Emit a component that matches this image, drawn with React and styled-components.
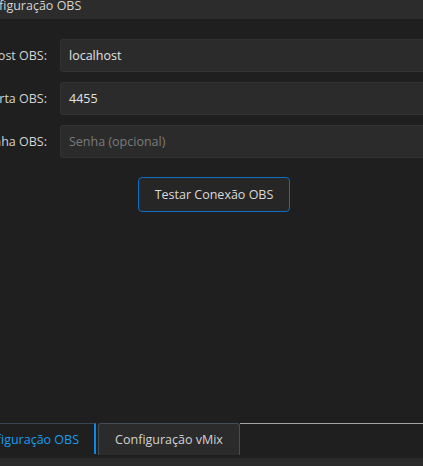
import React from "react";
import styled, { createGlobalStyle } from "styled-components";

const Global = createGlobalStyle`
  html, body { margin: 0; padding: 0; background: #1f1f1f; overflow: hidden; }
  body { font-family: "Open Sans", "Noto Sans", sans-serif; font-size: 12.5px; color: #d6d6d6; }
  #root { width: 423px; height: 466px; }
`;

const Window = styled.div`
  width: 423px;
  height: 466px;
  display: flex;
  flex-direction: column;
  background: #1f1f1f;
  overflow: hidden;
`;

const Header = styled.div`
  height: 19px;
  flex: none;
  background: #2c2c2c;
  display: flex;
  align-items: flex-start;
`;

const HeaderTitle = styled.span`
  margin-left: -24px;
  margin-top: -3px;
  font-size: 12.5px;
  color: #d4d4d4;
  white-space: nowrap;
`;

const Pane = styled.div`
  flex: 1;
  display: flex;
  flex-direction: column;
  padding-top: 20px;
`;

const Form = styled.div`
  display: flex;
  flex-direction: column;
  gap: 10px;
  width: 460px;
`;

const Row = styled.div`
  display: flex;
  align-items: center;
  gap: 13px;
`;

const Label = styled.div`
  width: 47px;
  flex: none;
  display: flex;
  justify-content: flex-end;
  white-space: nowrap;
  font-size: 12.5px;
  color: #d4d4d4;
`;

const Input = styled.input`
  flex: 1;
  min-width: 0;
  height: 33px;
  box-sizing: border-box;
  background: #2b2b2b;
  border: 1px solid #323232;
  border-radius: 3px;
  padding: 0 8px;
  font-family: inherit;
  font-size: 12.5px;
  color: #e2e2e2;
  outline: none;
  &::placeholder { color: #7b7b7b; }
`;

const ButtonRow = styled.div`
  display: flex;
  padding-top: 19px;
  padding-left: 138px;
`;

const Button = styled.button`
  width: 152px;
  height: 35px;
  box-sizing: border-box;
  background: #262626;
  border: 1px solid #0b6fc3;
  border-radius: 4px;
  font-family: inherit;
  font-size: 12.5px;
  color: #dadada;
  padding: 0;
`;

const Spacer = styled.div`
  flex: 1;
`;

const TabBar = styled.div`
  flex: none;
  height: 35px;
  display: flex;
  align-items: flex-start;
`;

const ActiveTab = styled.div`
  width: 96px;
  height: 31px;
  box-sizing: border-box;
  border-top: 1px solid #3b4654;
  border-right: 2px solid #0a8ae6;
  display: flex;
  align-items: center;
  justify-content: flex-end;
  padding-right: 15px;
  white-space: nowrap;
  color: #1a9cf0;
  font-size: 12.5px;
`;

const Tab = styled.div`
  margin-left: 2px;
  width: 142px;
  height: 32px;
  box-sizing: border-box;
  background: #2b2b2b;
  border: 1px solid #464d58;
  border-bottom: none;
  border-radius: 3px 3px 0 0;
  display: flex;
  align-items: center;
  justify-content: center;
  white-space: nowrap;
  color: #d2d2d2;
  font-size: 12.5px;
`;

const TabLine = styled.div`
  flex: 1;
  border-top: 1px solid #a3a3a3;
`;

const StatusBar = styled.div`
  flex: none;
  height: 8px;
  background: #2a2a2a;
`;

export default function App() {
  return (
    <>
      <Global />
      <Window>
        <Header>
          <HeaderTitle>Configuração OBS</HeaderTitle>
        </Header>
        <Pane>
          <Form>
            <Row>
              <Label>Host OBS:</Label>
              <Input defaultValue="localhost" />
            </Row>
            <Row>
              <Label>Porta OBS:</Label>
              <Input defaultValue="4455" />
            </Row>
            <Row>
              <Label>Senha OBS:</Label>
              <Input type="password" placeholder="Senha (opcional)" />
            </Row>
          </Form>
          <ButtonRow>
            <Button>Testar Conexão OBS</Button>
          </ButtonRow>
          <Spacer />
        </Pane>
        <TabBar>
          <ActiveTab>Configuração OBS</ActiveTab>
          <Tab>Configuração vMix</Tab>
          <TabLine />
        </TabBar>
        <StatusBar />
      </Window>
    </>
  );
}
